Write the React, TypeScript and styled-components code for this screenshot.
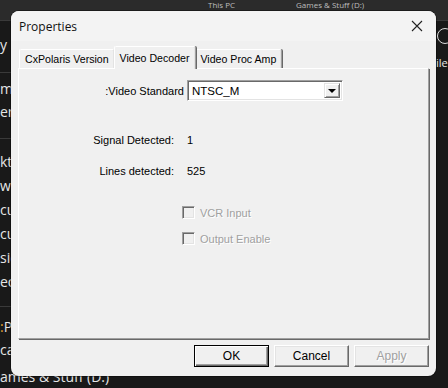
import * as React from 'react';
import styled, { createGlobalStyle } from 'styled-components';

const Global = createGlobalStyle`
    html, body { margin: 0; padding: 0; background: #1c1c1c; }
    body { width: 448px; height: 388px; overflow: hidden; font-family: "Liberation Sans", Arial, sans-serif; }
`;

const Desktop = styled.div`
    position: relative;
    width: 448px;
    height: 388px;
    background: #191919;
    overflow: hidden;
`;

const TopStrip = styled.div`
    position: absolute;
    left: 0; top: 0; right: 0;
    height: 20px;
    background: #2b2b2b;
    border-bottom: 1px solid #3a3a3a;
`;

const BgText = styled.div<{ x: number; y: number; dim?: boolean; size?: number }>`
    position: absolute;
    left: ${p => p.x}px;
    top: ${p => p.y}px;
    font-family: "Open Sans", "Noto Sans", sans-serif;
    font-size: ${p => p.size ?? 14}px;
    line-height: 1.3;
    color: ${p => (p.dim ? '#bdbdbd' : '#e6e6e6')};
    white-space: nowrap;
`;

const SideBand = styled.div<{ y: number }>`
    position: absolute;
    left: 0;
    top: ${p => p.y}px;
    width: 11px;
    height: 1px;
    background: #3a3a3a;
`;

const Window = styled.div`
    position: absolute;
    left: 11px;
    top: 11px;
    width: 425px;
    height: 365px;
    background: #f0f0f0;
    border-radius: 8px;
    box-shadow: 0 0 0 1px rgba(0, 0, 0, 0.35);
    display: flex;
    flex-direction: column;
    overflow: hidden;
    font-family: "Liberation Sans", Arial, sans-serif;
    font-size: 11px;
    color: #000;
`;

const TitleBar = styled.div`
    height: 30px;
    display: flex;
    align-items: center;
    justify-content: space-between;
    padding: 0 9px 0 8px;
    background: #f3f3f3;
    font-family: "Open Sans", "Noto Sans", sans-serif;
    font-size: 12px;
    color: #111;
`;

const CloseX = styled.svg`
    width: 12px;
    height: 12px;
    margin-right: 4px;
`;

const Body = styled.div`
    flex: 1;
    display: flex;
    flex-direction: column;
    padding: 5px 7px 0 7px;
`;

const TabStrip = styled.div`
    display: flex;
    align-items: flex-end;
    height: 22px;
    padding-left: 1px;
    position: relative;
    z-index: 1;
`;

const Tab = styled.div<{ active?: boolean }>`
    height: ${p => (p.active ? 22 : 18)}px;
    padding: 0 5px;
    margin: ${p => (p.active ? '0 -1px 0 -1px' : '0')};
    display: flex;
    align-items: center;
    background: #f0f0f0;
    border-top: 1px solid #fff;
    border-left: 1px solid #fff;
    border-right: 1px solid #a0a0a0;
    box-shadow: inset -1px 0 0 #e3e3e3, 1px 0 0 #696969;
    border-radius: 2px 2px 0 0;
    white-space: nowrap;
    font-size: 10.6px;
    position: relative;
    z-index: ${p => (p.active ? 2 : 1)};
    margin-bottom: ${p => (p.active ? -1 : 0)}px;
`;

const Panel = styled.div`
    height: 271px;
    width: 411px;
    box-sizing: border-box;
    border-top: 1px solid #fff;
    border-left: 1px solid #fff;
    border-right: 1px solid #a0a0a0;
    border-bottom: 1px solid #a0a0a0;
    box-shadow: 1px 1px 0 #696969;
    display: flex;
    flex-direction: column;
    padding-top: 11px;
`;

const Row = styled.div<{ gap: number }>`
    display: flex;
    align-items: center;
    margin-top: ${p => p.gap}px;
`;

const Label = styled.div<{ w: number }>`
    width: ${p => p.w}px;
    text-align: right;
    flex-shrink: 0;
`;

const Combo = styled.div`
    margin-left: 3px;
    width: 156px;
    height: 21px;
    box-sizing: border-box;
    background: #fff;
    border: 1px solid;
    border-color: #a0a0a0 #fff #fff #a0a0a0;
    box-shadow: inset 1px 1px 0 #696969, inset -1px -1px 0 #e3e3e3;
    display: flex;
    align-items: center;
    justify-content: space-between;
    padding: 0 2px 0 4px;
    font-size: 11.5px;
`;

const DropButton = styled.div`
    width: 16px;
    height: 15px;
    box-sizing: border-box;
    background: #f0f0f0;
    border: 1px solid;
    border-color: #e3e3e3 #696969 #696969 #e3e3e3;
    box-shadow: inset 1px 1px 0 #fff, inset -1px -1px 0 #a0a0a0;
    display: flex;
    align-items: center;
    justify-content: center;
`;

const Arrow = styled.div`
    width: 0;
    height: 0;
    border-left: 4px solid transparent;
    border-right: 4px solid transparent;
    border-top: 4px solid #000;
    margin-top: 1px;
`;

const Value = styled.div`
    margin-left: 13px;
`;

const CheckRow = styled.div<{ gap: number }>`
    display: flex;
    align-items: center;
    margin-top: ${p => p.gap}px;
    padding-left: 163px;
    color: #a0a0a0;
    text-shadow: 1px 1px 0 #fff;
`;

const CheckBox = styled.div`
    width: 13px;
    height: 13px;
    box-sizing: border-box;
    background: #f0f0f0;
    border: 1px solid;
    border-color: #a0a0a0 #fff #fff #a0a0a0;
    box-shadow: inset 1px 1px 0 #696969, inset -1px -1px 0 #e3e3e3;
    margin-right: 5px;
`;

const ButtonBar = styled.div`
    display: flex;
    justify-content: flex-end;
    gap: 5px;
    margin-top: 6px;
`;

const Button = styled.div<{ isDefault?: boolean; disabled?: boolean }>`
    width: 75px;
    height: 22px;
    box-sizing: border-box;
    display: flex;
    align-items: center;
    justify-content: center;
    background: #f0f0f0;
    border: 1px solid;
    border-color: ${p => (p.isDefault ? '#000' : '#fff #696969 #696969 #fff')};
    box-shadow: ${p =>
        p.isDefault
            ? 'inset 1px 1px 0 #fff, inset -1px -1px 0 #696969, inset -2px -2px 0 #a0a0a0'
            : 'inset -1px -1px 0 #a0a0a0, inset 1px 1px 0 #e3e3e3'};
    color: ${p => (p.disabled ? '#a0a0a0' : '#000')};
    text-shadow: ${p => (p.disabled ? '1px 1px 0 #fff' : 'none')};
    font-size: 12px;
`;

const Ring = styled.div`
    position: absolute;
    left: 437px;
    top: 28px;
    width: 14px;
    height: 14px;
    border-radius: 50%;
    border: 1.5px solid #ddd;
`;

export default function App() {
    return (
        <Desktop>
            <Global />
            <TopStrip />
            <BgText x={208} y={0} size={8} dim>This PC</BgText>
            <BgText x={296} y={0} size={8} dim>Games & Stuff (D:)</BgText>
            <BgText x={0} y={36}>y ⌄</BgText>
            <BgText x={436} y={56} size={11}>ile</BgText>
            <SideBand y={72} />
            <BgText x={0} y={80}>me</BgText>
            <BgText x={0} y={103}>ery</BgText>
            <SideBand y={138} />
            <BgText x={0} y={153}>kto</BgText>
            <BgText x={0} y={177}>wn</BgText>
            <BgText x={0} y={201}>cur</BgText>
            <BgText x={0} y={225}>cur</BgText>
            <BgText x={0} y={249}>sic</BgText>
            <BgText x={0} y={273}>eo</BgText>
            <SideBand y={306} />
            <BgText x={0} y={318}><span style={{ color: '#e0a030' }}>:</span>P</BgText>
            <BgText x={0} y={341}>ca</BgText>
            <BgText x={0} y={368}>ames & Stuff (D:)</BgText>
            <Ring />
            <Window>
                <TitleBar>
                    <span>Properties</span>
                    <CloseX viewBox="0 0 12 12">
                        <path d="M1 1 L11 11 M11 1 L1 11" stroke="#222" strokeWidth="1.1" fill="none" />
                    </CloseX>
                </TitleBar>
                <Body>
                    <TabStrip>
                        <Tab>CxPolaris Version</Tab>
                        <Tab active>Video Decoder</Tab>
                        <Tab>Video Proc Amp</Tab>
                    </TabStrip>
                    <Panel>
                        <Row gap={0}>
                            <Label w={165}>:Video Standard</Label>
                            <Combo>
                                <span>NTSC_M</span>
                                <DropButton><Arrow /></DropButton>
                            </Combo>
                        </Row>
                        <Row gap={33}>
                            <Label w={155}>Signal Detected:</Label>
                            <Value>1</Value>
                        </Row>
                        <Row gap={19}>
                            <Label w={155}>Lines detected:</Label>
                            <Value>525</Value>
                        </Row>
                        <CheckRow gap={29}>
                            <CheckBox />VCR Input
                        </CheckRow>
                        <CheckRow gap={13}>
                            <CheckBox />Output Enable
                        </CheckRow>
                    </Panel>
                    <ButtonBar>
                        <Button isDefault>OK</Button>
                        <Button>Cancel</Button>
                        <Button disabled>Apply</Button>
                    </ButtonBar>
                </Body>
            </Window>
        </Desktop>
    );
}
